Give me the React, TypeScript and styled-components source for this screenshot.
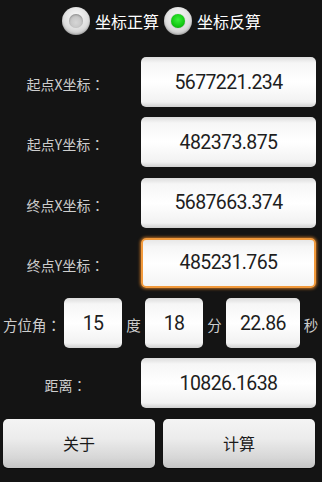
import React from 'react';
import styled, { createGlobalStyle, css } from 'styled-components';

const GlobalStyle = createGlobalStyle`
  html, body {
    margin: 0;
    padding: 0;
    background: #141414;
  }
  body {
    font-family: "Noto Sans CJK SC", "Noto Sans", sans-serif;
  }
`;

const fields = [
  { label: '起点X坐标', value: '5677221.234' },
  { label: '起点Y坐标', value: '482373.875' },
  { label: '终点X坐标', value: '5687663.374' },
  { label: '终点Y坐标', value: '485231.765', focused: true },
];

const angle = [
  { value: '15', unit: '度', width: 58 },
  { value: '18', unit: '分', width: 58 },
  { value: '22.86', unit: '秒', width: 74 },
];

const App = () => {
  return (
    <>
      <GlobalStyle />
      <Screen>
        <RadioGroup>
          <RadioOption>
            <RadioCircle />
            <RadioText>坐标正算</RadioText>
          </RadioOption>
          <RadioOption>
            <RadioCircle checked />
            <RadioText>坐标反算</RadioText>
          </RadioOption>
        </RadioGroup>

        <Form>
          {fields.map((f) => (
            <FieldRow key={f.label}>
              <FieldLabel>
                {f.label}
                <Colon>：</Colon>
              </FieldLabel>
              <ValueBox focused={f.focused}>{f.value}</ValueBox>
            </FieldRow>
          ))}

          <AngleRow>
            <AngleLabel>
              方位角<Colon>：</Colon>
            </AngleLabel>
            {angle.map((a) => (
              <React.Fragment key={a.unit}>
                <ValueBox style={{ width: a.width }}>{a.value}</ValueBox>
                <UnitLabel>{a.unit}</UnitLabel>
              </React.Fragment>
            ))}
          </AngleRow>

          <FieldRow>
            <FieldLabel>
              距离<Colon>：</Colon>
            </FieldLabel>
            <ValueBox>10826.1638</ValueBox>
          </FieldRow>

          <ButtonRow>
            <Button>关于</Button>
            <Button>计算</Button>
          </ButtonRow>
        </Form>
      </Screen>
    </>
  );
};

const Screen = styled.div`
  width: 322px;
  height: 482px;
  overflow: hidden;
  background: #141414;
`;

const RadioGroup = styled.div`
  display: flex;
  justify-content: center;
  align-items: center;
  gap: 5px;
  height: 41px;
  padding-left: 1px;
`;

const RadioOption = styled.div`
  display: flex;
  align-items: center;
  gap: 5px;
`;

const RadioCircle = styled.span<{ checked?: boolean }>`
  position: relative;
  display: block;
  width: 28px;
  height: 28px;
  border-radius: 50%;
  background: radial-gradient(circle at 50% 35%, #fafafa 0%, #dedede 55%, #b4b4b4 100%);
  box-shadow: inset 0 -1px 2px rgba(0, 0, 0, 0.25);

  &::after {
    content: '';
    position: absolute;
    left: 7px;
    top: 7px;
    width: 14px;
    height: 14px;
    border-radius: 50%;
    ${(p) =>
      p.checked
        ? css`
            background: radial-gradient(circle at 50% 40%, #3cf03c 0%, #12c812 60%, #0a8a0a 100%);
            box-shadow: 0 0 1px rgba(0, 80, 0, 0.6);
          `
        : css`
            background: radial-gradient(circle at 50% 60%, #d6d6d6 0%, #c4c4c4 60%, #a8a8a8 100%);
            box-shadow: inset 0 1px 2px rgba(0, 0, 0, 0.25);
          `}
  }
`;

const RadioText = styled.span`
  color: #ffffff;
  font-size: 16px;
  line-height: 20px;
`;

const Form = styled.div`
  display: flex;
  flex-direction: column;
  gap: 10.3px;
  padding-top: 16px;
`;

const FieldRow = styled.div`
  display: grid;
  grid-template-columns: 131px 175px;
  column-gap: 10px;
  align-items: center;
  height: 50px;
`;

const FieldLabel = styled.div`
  color: #cdcdcd;
  font-size: 14px;
  text-align: center;
  padding-top: 4px;
  white-space: nowrap;
`;

const Colon = styled.span`
  font-family: "Noto Sans CJK TC", "Noto Sans CJK SC", sans-serif;
`;

const ValueBox = styled.div<{ focused?: boolean }>`
  box-sizing: border-box;
  height: 50px;
  display: flex;
  align-items: center;
  justify-content: center;
  border-radius: 5px;
  background: linear-gradient(#dcdcdc 0%, #f6f6f6 12%, #ffffff 50%, #f2f2f2 90%, #d0d0d0 100%);
  color: #1e1e1e;
  font-family: Roboto, "Noto Sans", sans-serif;
  font-size: 19.5px;
  letter-spacing: -0.6px;
  ${(p) =>
    p.focused &&
    css`
      border: 2px solid #f29a3c;
      box-shadow: 0 0 3px 1px rgba(242, 140, 40, 0.7);
      background: linear-gradient(#e8e8e8 0%, #f6f6f6 15%, #ffffff 50%, #f4f4f4 100%);
    `}
`;

const AngleRow = styled.div`
  display: grid;
  grid-template-columns: 61px 58px 23px 58px 23px 74px 22px;
  align-items: center;
  height: 50px;
  padding-left: 3px;
`;

const AngleLabel = styled.div`
  color: #cdcdcd;
  font-size: 14.5px;
  white-space: nowrap;
  padding-top: 2px;
`;

const UnitLabel = styled.div`
  color: #cdcdcd;
  font-size: 14.5px;
  text-align: center;
  padding-top: 2px;
`;

const ButtonRow = styled.div`
  display: grid;
  grid-template-columns: 152px 152px;
  column-gap: 8px;
  padding-left: 3px;
`;

const Button = styled.div`
  height: 49px;
  border-radius: 5px;
  display: flex;
  align-items: center;
  justify-content: center;
  background: linear-gradient(#f4f4f4 0%, #ececec 40%, #d6d6d6 80%, #c4c4c4 100%);
  box-shadow: 0 1px 1px rgba(0, 0, 0, 0.6);
  color: #1a1a1a;
  font-size: 16px;
`;

export default App;
